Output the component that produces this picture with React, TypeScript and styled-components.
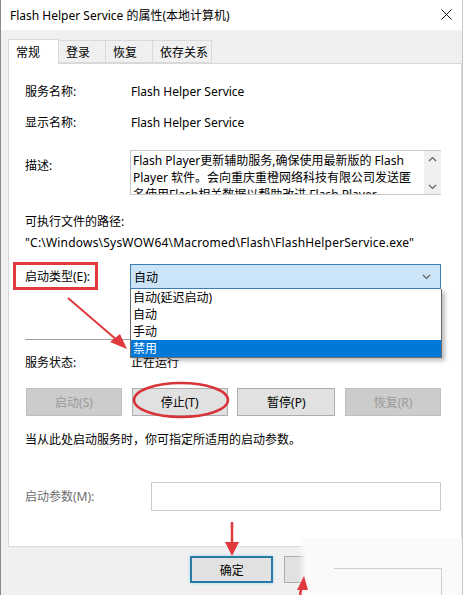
import styled, { createGlobalStyle } from 'styled-components'

const GlobalStyle = createGlobalStyle`
  html, body {
    margin: 0;
    padding: 0;
    background: #ffffff;
  }
  body {
    font-family: 'Segoe UI', 'Noto Sans', 'Noto Sans CJK SC', sans-serif;
    font-size: 12px;
    color: #000;
  }
`

const Window = styled.div`
  position: relative;
  width: 463px;
  height: 595px;
  background: #f0f0f0;
  border-left: 1px solid #8a8a8a;
  border-right: 1px solid #c8c8c8;
  box-sizing: border-box;
  overflow: hidden;
`

const TitleBar = styled.div`
  height: 29px;
  background: #ffffff;
  display: flex;
  align-items: center;
  justify-content: space-between;
  padding: 0 10px 1px 9px;
`

const Title = styled.div`
  font-size: 12px;
  color: #000;
`

const Body = styled.div`
  padding: 8px 0 0 7px;
`

const TabRow = styled.div`
  display: flex;
  align-items: flex-end;
  height: 25px;
  position: relative;
  z-index: 1;
`

const Tab = styled.div<{ $active?: boolean; $w: number }>`
  width: ${p => p.$w}px;
  height: ${p => (p.$active ? 25 : 23)}px;
  box-sizing: border-box;
  border: 1px solid #d9d9d9;
  border-bottom: ${p => (p.$active ? 'none' : '1px solid #d9d9d9')};
  border-left: ${p => (p.$active ? '1px solid #d9d9d9' : 'none')};
  background: ${p => (p.$active ? '#ffffff' : '#f0f0f0')};
  padding-left: 7px;
  display: flex;
  align-items: center;
  font-size: 12px;
  margin-bottom: ${p => (p.$active ? -1 : 0)}px;
`

const Panel = styled.div`
  width: 454px;
  box-sizing: border-box;
  background: #ffffff;
  border: 1px solid #d9d9d9;
  padding: 0 20px 35px 16px;
`

const Row = styled.div<{ $mt: number; $align?: string }>`
  display: flex;
  align-items: ${p => p.$align || 'center'};
  margin-top: ${p => p.$mt}px;
  position: relative;
`

const Label = styled.div<{ $w?: number; $dim?: boolean; $mt?: number }>`
  width: ${p => p.$w || 106}px;
  flex-shrink: 0;
  line-height: 16px;
  color: ${p => (p.$dim ? '#6d6d6d' : '#000')};
  margin-top: ${p => p.$mt || 0}px;
`

const Value = styled.div`
  line-height: 16px;
`

const Line = styled.div<{ $mt: number }>`
  margin-top: ${p => p.$mt}px;
  line-height: 16px;
`

const PathLine = styled(Line)`
  letter-spacing: 0.2px;
`

const DescBox = styled.div`
  width: 312px;
  height: 45px;
  box-sizing: border-box;
  border: 1px solid #c8c8c8;
  border-right: none;
  display: flex;
  overflow: hidden;
`

const DescText = styled.div`
  flex: 1;
  padding: 0 0 0 2px;
  line-height: 17px;
  margin-top: 1px;
  overflow: hidden;
  white-space: nowrap;
`

const ScrollBar = styled.div`
  width: 17px;
  background: #f0f0f0;
  display: flex;
  flex-direction: column;
  justify-content: space-between;
  align-items: center;
  padding: 5px 0 4px;
  box-sizing: border-box;
`

const RedBox = styled.div`
  position: absolute;
  left: -12px;
  top: -2px;
  width: 85px;
  height: 28px;
  border: 3px solid #e0393e;
  box-sizing: border-box;
`

const ComboWrap = styled.div`
  position: relative;
  width: 312px;
`

const Combo = styled.div`
  height: 25px;
  box-sizing: border-box;
  background: #cce4f7;
  border: 1px solid #3d7fb3;
  display: flex;
  align-items: center;
  justify-content: space-between;
  padding: 0 9px 0 3px;
`

const DropList = styled.div`
  position: absolute;
  left: 0;
  top: 25px;
  width: 312px;
  box-sizing: border-box;
  background: #ffffff;
  border: 1px solid #6b6b6b;
  border-top: none;
  box-shadow: 3px 3px 4px rgba(0, 0, 0, 0.25);
  z-index: 3;
`

const DropItem = styled.div<{ $sel?: boolean }>`
  height: 17px;
  line-height: 17px;
  padding-left: 2px;
  background: ${p => (p.$sel ? '#0078d7' : 'transparent')};
  color: ${p => (p.$sel ? '#ffffff' : '#000')};
`

const Separator = styled.div`
  margin-top: 50px;
  height: 1px;
  background: #a0a0a0;
`

const ButtonRow = styled.div`
  display: flex;
  justify-content: space-between;
  margin-top: 17px;
  padding-left: 1px;
  position: relative;
`

const Btn = styled.div<{ $disabled?: boolean; $w: number }>`
  width: ${p => p.$w}px;
  height: 28px;
  box-sizing: border-box;
  background: ${p => (p.$disabled ? '#cccccc' : '#e1e1e1')};
  border: 1px solid ${p => (p.$disabled ? '#bfbfbf' : '#adadad')};
  color: ${p => (p.$disabled ? '#9a9a9a' : '#000')};
  display: flex;
  align-items: center;
  justify-content: center;
`

const Input = styled.div`
  width: 291px;
  height: 29px;
  box-sizing: border-box;
  border: 1px solid #cccccc;
  background: #ffffff;
`

const Footer = styled.div`
  display: flex;
  gap: 11px;
  margin-top: 9px;
  padding-left: 182px;
`

const FooterBtn = styled.div<{ $default?: boolean }>`
  width: 84px;
  height: 27px;
  box-sizing: border-box;
  background: #e1e1e1;
  border: ${p => (p.$default ? '2px solid #2b7aa3' : '1px solid #adadad')};
  box-shadow: ${p => (p.$default ? '0 0 3px #9fd6f0' : 'none')};
  display: flex;
  align-items: center;
  justify-content: center;
`

const Smear = styled.div`
  position: absolute;
  left: 297px;
  top: 538px;
  width: 170px;
  height: 60px;
  background: linear-gradient(to right, rgba(250, 250, 250, 0) 0px, #fafafa 8px);
  z-index: 4;
`

const SmearLine = styled.div`
  position: absolute;
  left: 36px;
  top: 30px;
  width: 107px;
  height: 40px;
  border-top: 1px solid #d0d0d0;
  border-right: 1px solid #d0d0d0;
`

const Annotations = styled.svg`
  position: absolute;
  left: 0;
  top: 0;
  width: 472px;
  height: 595px;
  pointer-events: none;
  z-index: 5;
`

const Chevron = ({ up }: { up?: boolean }) => (
  <svg width="9" height="6" viewBox="0 0 9 6">
    <path d={up ? 'M1 5 L4.5 1.5 L8 5' : 'M1 1 L4.5 4.5 L8 1'} fill="none" stroke="#606060" strokeWidth="1.2" />
  </svg>
)

export default function App() {
  return (
    <>
      <GlobalStyle />
      <Window>
        <TitleBar>
          <Title>Flash Helper Service 的属性(本地计算机)</Title>
          <svg width="11" height="11" viewBox="0 0 11 11">
            <path d="M0.5 0.5 L10.5 10.5 M10.5 0.5 L0.5 10.5" stroke="#111" strokeWidth="1" />
          </svg>
        </TitleBar>
        <Body>
          <TabRow>
            <Tab $active $w={51}>常规</Tab>
            <Tab $w={47}>登录</Tab>
            <Tab $w={47}>恢复</Tab>
            <Tab $w={59}>依存关系</Tab>
          </TabRow>
          <Panel>
            <Row $mt={20}>
              <Label>服务名称:</Label>
              <Value>Flash Helper Service</Value>
            </Row>
            <Row $mt={15}>
              <Label>显示名称:</Label>
              <Value>Flash Helper Service</Value>
            </Row>
            <Row $mt={19} $align="flex-start">
              <Label $w={105} $mt={8}>描述:</Label>
              <DescBox>
                <DescText>
                  Flash Player更新辅助服务,确保使用最新版的 Flash<br />
                  Player 软件。会向重庆重橙网络科技有限公司发送匿<br />
                  名使用Flash相关数据以帮助改进 Flash Player
                </DescText>
                <ScrollBar>
                  <Chevron up />
                  <Chevron />
                </ScrollBar>
              </DescBox>
            </Row>
            <Line $mt={19}>可执行文件的路径:</Line>
            <PathLine $mt={5}>"C:\Windows\SysWOW64\Macromed\Flash\FlashHelperService.exe"</PathLine>
            <Row $mt={13}>
              <RedBox />
              <Label $w={105}>启动类型(E):</Label>
              <ComboWrap>
                <Combo>
                  <span>自动</span>
                  <Chevron />
                </Combo>
                <DropList>
                  <DropItem>自动(延迟启动)</DropItem>
                  <DropItem>自动</DropItem>
                  <DropItem>手动</DropItem>
                  <DropItem $sel>禁用</DropItem>
                </DropList>
              </ComboWrap>
            </Row>
            <Separator />
            <Row $mt={15}>
              <Label>服务状态:</Label>
              <Value>正在运行</Value>
            </Row>
            <ButtonRow>
              <Btn $disabled $w={96}>启动(S)</Btn>
              <Btn $w={96}>停止(T)</Btn>
              <Btn $w={98}>暂停(P)</Btn>
              <Btn $disabled $w={96}>恢复(R)</Btn>
            </ButtonRow>
            <Line $mt={16}>当从此处启动服务时，你可指定所适用的启动参数。</Line>
            <Row $mt={34}>
              <Label $w={126} $dim>启动参数(M):</Label>
              <Input />
            </Row>
          </Panel>
          <Footer>
            <FooterBtn $default>确定</FooterBtn>
            <FooterBtn>取消</FooterBtn>
            <FooterBtn>应用(A)</FooterBtn>
          </Footer>
        </Body>
        <Smear>
          <SmearLine />
        </Smear>
      </Window>
      <Annotations viewBox="0 0 472 595">
        <ellipse cx="181" cy="400" rx="47" ry="17" fill="none" stroke="#d9343a" strokeWidth="2.5" />
        <line x1="68" y1="298" x2="118" y2="341" stroke="#e0393e" strokeWidth="2" />
        <polygon points="127,349 110,342 120,334" fill="#e0393e" />
        <line x1="232" y1="522" x2="232" y2="545" stroke="#e0393e" strokeWidth="2.5" />
        <polygon points="232,556 225,542 239,542" fill="#e0393e" />
        <line x1="300" y1="595" x2="302" y2="585" stroke="#e0393e" strokeWidth="2.5" />
        <polygon points="304,576 297,590 308,590" fill="#e0393e" />
      </Annotations>
    </>
  )
}
